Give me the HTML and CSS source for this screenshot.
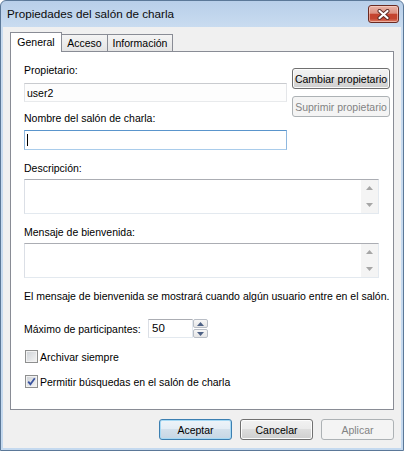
FILE: index.html
```html
<!DOCTYPE html>
<html lang="es">
<head>
<meta charset="utf-8">
<title>Propiedades del salón de charla</title>
<link rel="stylesheet" href="styles.css">
</head>
<body>
<div class="window">
  <div class="titlebar">
    <span class="title">Propiedades del salón de charla</span>
    <div class="close" aria-label="Cerrar">
      <svg width="13" height="11" viewBox="0 0 13 11">
        <path d="M2.5 2 L10.5 9 M10.5 2 L2.5 9" stroke="#5a2a24" stroke-width="4" stroke-linecap="round"/>
        <path d="M2.5 2 L10.5 9 M10.5 2 L2.5 9" stroke="#ffffff" stroke-width="2.2" stroke-linecap="round"/>
      </svg>
    </div>
  </div>
  <div class="client">
    <div class="tabs">
      <div class="tab active">General</div>
      <div class="tab t-acceso">Acceso</div>
      <div class="tab t-info">Información</div>
    </div>
    <div class="panel">
      <div class="top">
        <div class="left">
          <div class="label">Propietario:</div>
          <div class="field readonly">user2</div>
          <div class="label gap9">Nombre del salón de charla:</div>
          <div class="field focused"><span class="caret"></span></div>
        </div>
        <div class="right">
          <div class="btn">Cambiar propietario</div>
          <div class="btn disabled">Suprimir propietario</div>
        </div>
      </div>
      <div class="label gap11">Descripción:</div>
      <div class="area">
        <div class="scroll">
          <div class="arrow"><svg width="7" height="4" viewBox="0 0 7 4"><path d="M0 4 L3.5 0 L7 4 Z" fill="#a6a6a6"/></svg></div>
          <div class="arrow"><svg width="7" height="4" viewBox="0 0 7 4"><path d="M0 0 L3.5 4 L7 0 Z" fill="#a6a6a6"/></svg></div>
        </div>
      </div>
      <div class="label gap11">Mensaje de bienvenida:</div>
      <div class="area">
        <div class="scroll">
          <div class="arrow"><svg width="7" height="4" viewBox="0 0 7 4"><path d="M0 4 L3.5 0 L7 4 Z" fill="#a6a6a6"/></svg></div>
          <div class="arrow"><svg width="7" height="4" viewBox="0 0 7 4"><path d="M0 0 L3.5 4 L7 0 Z" fill="#a6a6a6"/></svg></div>
        </div>
      </div>
      <div class="label gap11 info">El mensaje de bienvenida se mostrará cuando algún usuario entre en el salón.</div>
      <div class="spinrow">
        <span class="spinlabel">Máximo de participantes:</span>
        <div class="spinfield">50</div>
        <div class="spinner">
          <div class="sbtn"><svg width="7" height="4" viewBox="0 0 7 4"><path d="M0 4 L3.5 0 L7 4 Z" fill="#4d6185"/></svg></div>
          <div class="sbtn"><svg width="7" height="4" viewBox="0 0 7 4"><path d="M0 0 L3.5 4 L7 0 Z" fill="#4d6185"/></svg></div>
        </div>
      </div>
      <div class="check">
        <span class="box"></span>
        <span class="clabel">Archivar siempre</span>
      </div>
      <div class="check">
        <span class="box">
          <svg width="11" height="11" viewBox="0 0 11 11"><path d="M2.2 5.6 L4.4 8.2 L8.8 2.2" fill="none" stroke="#3a54a0" stroke-width="1.8"/></svg>
        </span>
        <span class="clabel">Permitir búsquedas en el salón de charla</span>
      </div>
    </div>
    <div class="buttons">
      <div class="btn dlg default">Aceptar</div>
      <div class="btn dlg">Cancelar</div>
      <div class="btn dlg disabled">Aplicar</div>
    </div>
  </div>
</div>
</body>
</html>
```

FILE: styles.css
```css
* { box-sizing: border-box; }
html, body { margin: 0; padding: 0; }
body {
  width: 404px;
  height: 451px;
  overflow: hidden;
  background: #ffffff;
  font-family: "Liberation Sans", Arial, sans-serif;
  font-size: 10.5px;
  color: #000;
}
.window {
  width: 404px;
  height: 451px;
  border: 1px solid #5b7898;
  border-radius: 6px 6px 0 0;
  background: linear-gradient(180deg, #b8cfe9 0px, #c9dcf0 26px, #c4d9ef 100%);
  padding: 0 2px 2px 2px;
  display: flex;
  flex-direction: column;
}
.titlebar {
  height: 26px;
  flex: none;
  display: flex;
  align-items: center;
  padding-left: 4px;
}
.title {
  flex: 1;
  font-size: 11.7px;
  line-height: 14px;
  color: #0b0b0b;
}
.close {
  width: 31px;
  height: 18px;
  margin-right: 2px;
  border: 1px solid #6a2a22;
  border-radius: 3px;
  background: linear-gradient(180deg, #e9b2a6 0%, #dc9181 45%, #c4442f 52%, #c4452f 78%, #dc7e68 100%);
  box-shadow: inset 0 0 0 1px rgba(255,220,210,0.55);
  display: flex;
  align-items: center;
  justify-content: center;
}
.client {
  flex: 1;
  background: #f0f0f0;
  padding: 5px 7px 0 7px;
  display: flex;
  flex-direction: column;
}
.tabs {
  height: 19px;
  display: flex;
  align-items: flex-end;
  flex: none;
}
.tab {
  height: 17px;
  border: 1px solid #898c95;
  border-left: none;
  border-bottom: none;
  background: linear-gradient(180deg, #f4f4f4, #e4e4e4);
  text-align: center;
  line-height: 16px;
  white-space: nowrap;
}
.tab.active {
  width: 52px;
  height: 20px;
  margin-bottom: -1px;
  border-left: 1px solid #898c95;
  background: #ffffff;
  line-height: 18px;
  position: relative;
  z-index: 1;
}
.t-acceso { width: 46px; }
.t-info { width: 65px; }
.panel {
  height: 359px;
  flex: none;
  border: 1px solid #898c95;
  background: #ffffff;
  padding: 11px 0 0 13px;
}
.top {
  display: flex;
  gap: 5px;
}
.left {
  width: 263px;
  display: flex;
  flex-direction: column;
}
.right {
  padding-top: 5px;
  display: flex;
  flex-direction: column;
  gap: 7px;
}
.label {
  height: 14px;
  line-height: 14px;
  white-space: nowrap;
}
.gap9 { margin-top: 9px; }
.gap11 { margin-top: 11px; }
.field {
  width: 263px;
  border: 1px solid;
  background: #fff;
  padding-left: 2px;
  display: flex;
  align-items: center;
}
.readonly {
  height: 19px;
  margin-top: 6px;
  border-color: #c9cbcf #e4e6e9 #e8eaec #e2e4e7;
  background: #fdfdfd;
}
.focused {
  height: 20px;
  margin-top: 5px;
  border-color: #5a95cc #8fb8df #a9cceb #8fb8df;
}
.caret {
  width: 1px;
  height: 12px;
  background: #000;
}
.area {
  width: 355px;
  height: 35px;
  margin-top: 4px;
  border: 1px solid;
  border-color: #abadb3 #e3e9ef #e3e9ef #dbdfe6;
  background: #fff;
  display: flex;
  justify-content: flex-end;
}
.scroll {
  width: 17px;
  height: 33px;
  background: #f4f4f4;
  display: flex;
  flex-direction: column;
  justify-content: space-between;
}
.arrow {
  height: 16px;
  display: flex;
  align-items: center;
  justify-content: center;
}
.spinrow {
  margin-top: 16px;
  height: 19px;
  display: flex;
  align-items: center;
}
.spinlabel {
  width: 124px;
  white-space: nowrap;
}
.spinfield {
  width: 45px;
  height: 19px;
  border: 1px solid;
  border-color: #abadb3 #e3e9ef #e3e9ef #dbdfe6;
  padding-left: 3px;
  font-size: 11.5px;
  line-height: 17px;
  background: #fff;
}
.spinner {
  width: 15px;
  height: 19px;
  display: flex;
  flex-direction: column;
  gap: 1px;
}
.sbtn {
  flex: 1;
  border: 1px solid #b9bec6;
  border-radius: 2px;
  background: linear-gradient(180deg, #f6f6f6, #e6e6e6);
  display: flex;
  align-items: center;
  justify-content: center;
}
.check {
  margin-top: 12px;
  height: 13px;
  display: flex;
  align-items: center;
  padding-left: 1px;
}
.box {
  width: 13px;
  height: 13px;
  border: 1px solid #8e8f8f;
  background: linear-gradient(135deg, #cdd1d6, #f5f5f5);
  box-shadow: inset 0 0 0 1px #f2f2f2;
  display: flex;
  align-items: center;
  justify-content: center;
}
.clabel {
  margin-left: 2px;
  white-space: nowrap;
}
.btn {
  width: 98px;
  height: 21px;
  border: 1px solid #707070;
  border-radius: 3px;
  background: linear-gradient(180deg, #f2f2f2 0%, #ebebeb 45%, #dddddd 50%, #cfcfcf 100%);
  box-shadow: inset 0 0 0 1px #fcfcfc;
  display: flex;
  align-items: center;
  justify-content: center;
  white-space: nowrap;
}
.btn.disabled {
  border-color: #adb2b5;
  background: #f4f4f4;
  box-shadow: none;
  color: #838383;
}
.buttons {
  margin-top: 9px;
  display: flex;
  justify-content: flex-end;
  gap: 8px;
}
.btn.dlg { width: 73px; }
.btn.default {
  border-color: #3c7fb1;
  background: linear-gradient(180deg, #eef4f9 0%, #e4edf5 45%, #d3e0eb 50%, #c6d6e4 100%);
  box-shadow: inset 0 0 0 1px #a6d9f4;
}
```
